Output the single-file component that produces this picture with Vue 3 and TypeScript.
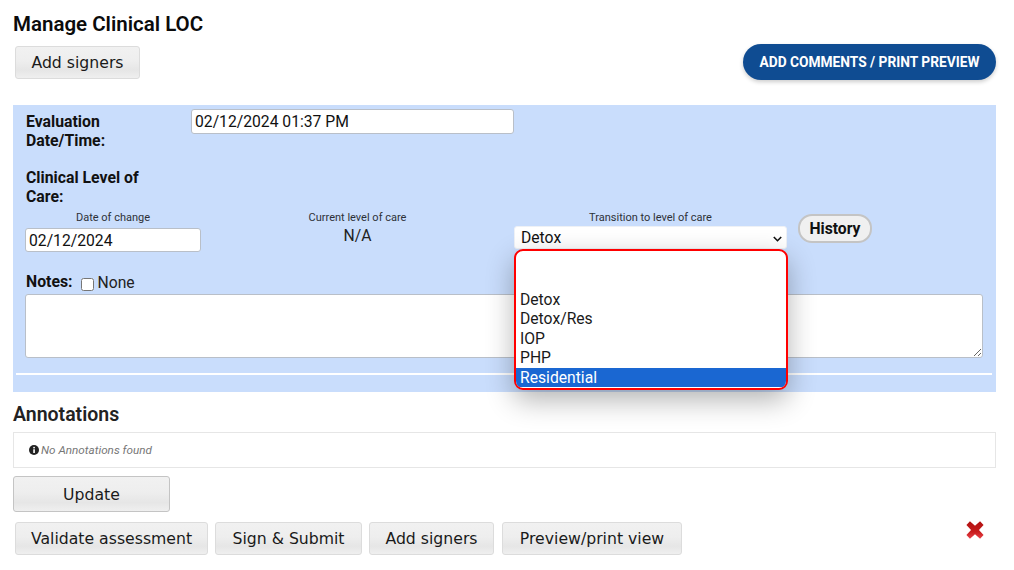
<script setup lang="ts">
import { ref } from 'vue'
const evalDate = ref('02/12/2024 01:37 PM')
const changeDate = ref('02/12/2024')
const options = ['', 'Detox', 'Detox/Res', 'IOP', 'PHP', 'Residential']
const actions = ['Validate assessment', 'Sign & Submit', 'Add signers', 'Preview/print view']
</script>

<template>
  <div class="page">
    <h1 class="title">Manage Clinical LOC</h1>
    <div class="top-row">
      <button class="gbtn">Add signers</button>
      <button class="pill">ADD COMMENTS / PRINT PREVIEW</button>
    </div>

    <section class="panel">
      <div class="eval-row">
        <div class="label eval-label">Evaluation Date/Time:</div>
        <input class="field eval-input" v-model="evalDate" />
      </div>
      <div class="label care-label">Clinical Level of Care:</div>
      <div class="care-row">
        <div class="col col-date">
          <div class="cap">Date of change</div>
          <input class="field date-input" v-model="changeDate" />
        </div>
        <div class="col col-current">
          <div class="cap">Current level of care</div>
          <div class="na">N/A</div>
        </div>
        <div class="col col-trans">
          <div class="cap">Transition to level of care</div>
          <select class="field sel">
            <option>Detox</option>
          </select>
          <svg class="chev" viewBox="0 0 9 6" width="9" height="6">
            <path d="M.8 1 4.5 4.7 8.2 1" fill="none" stroke="#111" stroke-width="1.6" />
          </svg>
          <ul class="popup">
            <li v-for="o in options" :key="o" :class="{ on: o === 'Residential' }">{{ o }}</li>
          </ul>
        </div>
        <button class="history">History</button>
      </div>
      <div class="notes-row">
        <span class="label">Notes:</span>
        <input type="checkbox" class="check" />
        <span class="none">None</span>
      </div>
      <textarea class="notes"></textarea>
      <div class="rule"></div>
    </section>

    <h2 class="ann-title">Annotations</h2>
    <div class="ann-box">
      <svg class="info" viewBox="0 0 16 16" width="10" height="10">
        <circle cx="8" cy="8" r="8" fill="#222" />
        <rect x="6.8" y="6.8" width="2.6" height="6" fill="#fff" />
        <rect x="6.8" y="3" width="2.6" height="2.4" fill="#fff" />
      </svg>
      <em>No Annotations found</em>
    </div>
    <button class="gbtn update">Update</button>
    <div class="actions">
      <button v-for="a in actions" :key="a" class="gbtn">{{ a }}</button>
      <svg class="close" viewBox="0 0 20 20" width="22" height="22">
        <defs>
          <linearGradient id="xg" x1="0" y1="0" x2="0" y2="1">
            <stop offset="0" stop-color="#b01212" />
            <stop offset="0.6" stop-color="#c81c1c" />
            <stop offset="1" stop-color="#e8444c" />
          </linearGradient>
        </defs>
        <path d="M2.2 5.4 5.4 2 10 6.2 14.6 2 17.8 5.4 13.6 10 17.8 14.6 14.6 18 10 13.8 5.4 18 2.2 14.6 6.4 10Z" fill="url(#xg)" />
      </svg>
    </div>
  </div>
</template>

<style scoped>
.page {
  box-sizing: border-box;
  width: 1014px;
  height: 570px;
  padding: 13px 18px 0 13px;
  font-family: Roboto, "Liberation Sans", sans-serif;
  color: #111;
  background: #fff;
  overflow: hidden;
}
.title {
  margin: 0;
  font-size: 20.5px;
  line-height: 23px;
  font-weight: 600;
  color: #0b0b0b;
}
.top-row {
  display: flex;
  justify-content: space-between;
  align-items: flex-start;
  margin-top: 10px;
  padding-left: 2px;
  height: 59px;
}
.gbtn {
  box-sizing: border-box;
  height: 33px;
  padding: 0 15px;
  border: 1px solid #dcdcdc;
  border-radius: 3px;
  background: linear-gradient(#f1f1f1, #eeeeee 45%, #e6e6e6 75%, #efefef);
  font-family: "DejaVu Sans", sans-serif;
  font-size: 15.7px;
  color: #1a1a1a;
  white-space: nowrap;
}
.top-row .gbtn {
  width: 125px;
}
.pill {
  width: 253px;
  height: 36px;
  margin-top: -2px;
  padding: 0;
  border: 0;
  border-radius: 18px;
  background: #0f4c92;
  color: #fff;
  font-family: Roboto, sans-serif;
  font-size: 13.75px;
  font-weight: 700;
  white-space: nowrap;
  box-shadow: 0 2px 4px rgba(0, 0, 0, 0.2);
}
.panel {
  box-sizing: border-box;
  height: 287px;
  padding: 4px 3px 0 12px;
  background: #c9ddfc;
}
.eval-row {
  display: flex;
  align-items: flex-start;
  height: 59px;
}
.label {
  font-size: 15.8px;
  line-height: 19px;
  font-weight: 700;
  color: #111;
  padding: 3px 0 0 1px;
  box-sizing: border-box;
}
.eval-label {
  width: 166px;
  padding-right: 40px;
}
.field {
  box-sizing: border-box;
  background: #fff;
  border: 1px solid #b9bfc8;
  border-radius: 3px;
  font-family: Roboto, sans-serif;
  font-size: 15.7px;
  color: #111;
  padding: 0 3px;
  outline: none;
}
.eval-input {
  width: 323px;
  height: 25px;
}
.care-label {
  width: 130px;
  padding-top: 0;
}
.care-row {
  display: flex;
  align-items: flex-start;
  margin-top: 5px;
  height: 57px;
}
.col {
  display: flex;
  flex-direction: column;
  align-items: center;
}
.col-date {
  width: 176px;
}
.col-current {
  width: 313px;
}
.col-trans {
  position: relative;
  width: 273px;
}
.cap {
  font-size: 11px;
  line-height: 14px;
  color: #2d3138;
}
.date-input {
  width: 176px;
  height: 24px;
  margin-top: 3px;
  padding-left: 3px;
}
.na {
  font-size: 15.7px;
  line-height: 20px;
  margin-top: 1px;
  color: #222;
}
.sel {
  appearance: none;
  width: 273px;
  height: 23px;
  margin-top: 1px;
  padding: 0 6px;
  border-color: #eef1f6;
}
.chev {
  position: absolute;
  right: 5px;
  top: 25px;
  pointer-events: none;
}
.popup {
  position: absolute;
  z-index: 5;
  left: 0;
  top: 38px;
  box-sizing: border-box;
  width: 274px;
  height: 141px;
  margin: 0;
  padding: 0;
  list-style: none;
  background: #fff;
  border: 2.5px solid #f00;
  border-radius: 9px;
  overflow: hidden;
  box-shadow: 0 10px 28px rgba(0, 0, 0, 0.3);
}
.popup li {
  height: 19.6px;
  line-height: 19.6px;
  padding-left: 4px;
  font-size: 15.7px;
  color: #1a1a1a;
}
.popup li:first-child {
  height: 38.5px;
}
.popup li.on {
  background: #1a67d2;
  color: #fff;
}
.history {
  box-sizing: border-box;
  height: 29px;
  width: 74px;
  margin: 3px 0 0 11px;
  padding: 0;
  background: #f0f0f0;
  border: 2px solid #c4c4c4;
  border-radius: 14px;
  font-family: Roboto, sans-serif;
  font-size: 15.7px;
  font-weight: 700;
  color: #111;
}
.notes-row {
  display: flex;
  align-items: center;
  height: 24px;
  margin-top: 2px;
}
.notes-row .label {
  padding: 0 0 0 1px;
  margin-top: -2px;
}
.check {
  width: 13px;
  height: 13px;
  margin: 5px 4px 0 8px;
}
.none {
  font-size: 15.7px;
  color: #222;
  margin-top: 1px;
}
.notes {
  display: block;
  box-sizing: border-box;
  width: 958px;
  height: 64px;
  margin-top: 0;
  background: #fff;
  border: 1px solid #b9bfc8;
  border-radius: 3px;
  outline: none;
}
.rule {
  height: 2px;
  margin: 15px 0 0 -9px;
  width: 976px;
  background: #fff;
}
.ann-title {
  margin: 12px 0 0;
  font-size: 19.5px;
  line-height: 21px;
  font-weight: 600;
  color: #222;
}
.ann-box {
  box-sizing: border-box;
  display: flex;
  align-items: center;
  gap: 2px;
  height: 36px;
  margin-top: 7px;
  padding-left: 15px;
  border: 1px solid #e6e6e6;
  font-size: 11.7px;
  color: #777;
}
.update {
  display: block;
  width: 157px;
  height: 36px;
  margin-top: 8px;
  border-color: #c4c4c4;
}
.actions {
  position: relative;
  display: flex;
  gap: 7px;
  margin-top: 10px;
  padding-left: 2px;
}
.actions .gbtn {
  padding: 0;
}
.actions .gbtn:nth-child(1) {
  width: 193px;
}
.actions .gbtn:nth-child(2) {
  width: 147px;
}
.actions .gbtn:nth-child(3) {
  width: 125px;
}
.actions .gbtn:nth-child(4) {
  width: 180px;
  margin-left: 1px;
}
.close {
  position: absolute;
  right: 10px;
  top: -3px;
}
</style>
